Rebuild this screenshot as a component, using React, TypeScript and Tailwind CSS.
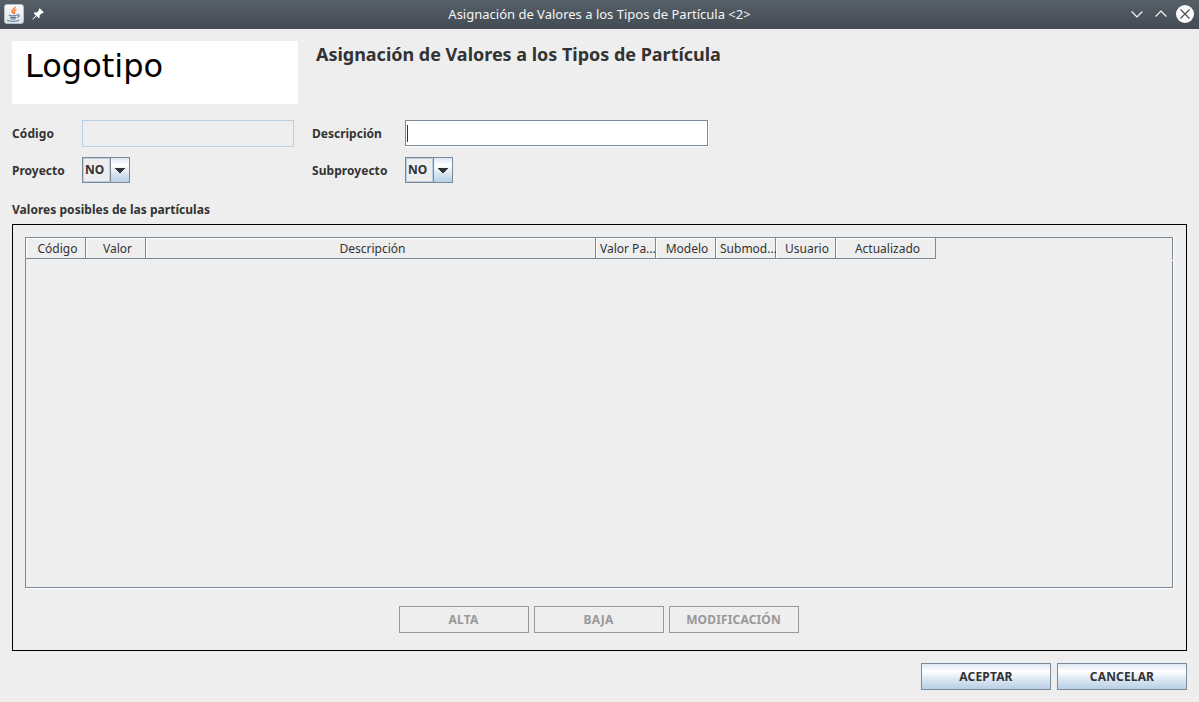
import React from "react";

const columns = [
  { label: "Código", width: "w-[60px]", pad: "pl-[3px]" },
  { label: "Valor", width: "w-[60px]", pad: "pl-[3px]" },
  { label: "Descripción", width: "w-[450px]", pad: "pl-[3px]" },
  { label: "Valor Pa...", width: "w-[60px]", pad: "pl-[3px]" },
  { label: "Modelo", width: "w-[60px]", pad: "pl-[2px]" },
  { label: "Submod...", width: "w-[60px]", pad: "pl-[3px]" },
  { label: "Usuario", width: "w-[60px]", pad: "pl-[2px]" },
  { label: "Actualizado", width: "w-[100px]", pad: "pl-[3px]" },
];

function JavaIcon() {
  return (
    <svg width="20" height="20" viewBox="0 0 20 20" className="block">
      <defs>
        <linearGradient id="tile" x1="0" y1="0" x2="0" y2="1">
          <stop offset="0" stopColor="#fafbfb" />
          <stop offset="1" stopColor="#dfe3e6" />
        </linearGradient>
      </defs>
      <rect x="0.5" y="0.5" width="19" height="19" rx="2.5" fill="url(#tile)" stroke="#b3bfc9" />
      <path d="M11.2 2.6c.4 2-3.6 3-3.2 4.900.2.9 1.500 1.500 1.700 2.500M12.500 5.300c-1.600.9-2.900 1.600-2.400 2.600.4.800.9 1.100.2 2.200" fill="none" stroke="#ee7a30" strokeWidth="1.300" />
      <path d="M4.800 11c2.500 1 6.500.9 8.500 0M6 12.900c2 .8 4.500.7 6.300 0M6.600 14.500c1.600.7 3.600.6 5 0M13.200 11c2.300-.9 3.300 1.300.2 2.700M3.600 15.800c-.9 1.700 9 2 11.400.4" fill="none" stroke="#587f9c" strokeWidth="1.100" />
    </svg>
  );
}

function PinIcon() {
  return (
    <svg width="12" height="12" viewBox="0 0 12 12" className="block">
      <path d="M7.700.3 11.700 4.300 10.700 5.400 9.900 5 7.500 7.400 7.700 9.500 6.700 10.300 4.600 8.100 1 11.600.4 11 3.900 7.400 1.700 5.300 2.600 4.300 4.800 4.500 7 2.300 6.600 1.400Z" fill="#fff" />
    </svg>
  );
}

function TitleBar() {
  return (
    <header className="flex h-[29px] items-center bg-linear-to-b from-[#566069] to-[#434b53] pl-1 pr-[5px] text-[#f4f5f5]">
      <div className="flex w-[70px] items-center gap-2 pb-[1px]">
        <JavaIcon />
        <PinIcon />
      </div>
      <h1 className="flex-1 whitespace-nowrap pl-[1px] text-center text-[13px] leading-[29px]">
        Asignación de Valores a los Tipos de Partícula &lt;2&gt;
      </h1>
      <div className="flex w-[70px] items-center justify-end pb-[1px]">
        <svg width="63" height="18" viewBox="0 0 63 18" className="block">
          <path d="M.6 6.500 6 11.900l5.400-5.400M24.600 11.500 30 6.100l5.400 5.400" fill="none" stroke="#fcfcfc" strokeWidth="1.100" />
          <circle cx="54" cy="9" r="9" fill="#fcfcfc" />
          <path d="m49.500 4.500 9 9m0-9-9 9" stroke="#465059" strokeWidth="1.200" />
        </svg>
      </div>
    </header>
  );
}

function Combo({ value }: { value: string }) {
  return (
    <div className="flex h-[26px] w-[48px] border border-[#7a8a99]">
      <div className="w-[27px] border border-[#b8cfe5] pl-[1px] leading-[22px]">{value}</div>
      <div className="flex w-[19px] items-center justify-center border-l border-[#7a8a99] bg-[linear-gradient(to_bottom,#dde8f3_0%,#ffffff_30%,#dde8f3_60%,#b8cfe5_100%)]">
        <svg width="10" height="5" viewBox="0 0 10 5" shapeRendering="crispEdges" className="mt-px block">
          <path d="M0 0h10v1H9v1H8v1H7v1H6v1H4V4H3V3H2V2H1V1H0z" fill="#333" />
        </svg>
      </div>
    </div>
  );
}

function Button({ label, disabled = false }: { label: string; disabled?: boolean }) {
  return (
    <button
      disabled={disabled}
      className={
        "h-[27px] w-[130px] whitespace-nowrap border text-center font-bold leading-[25px] tracking-[0.15px] " +
        (disabled
          ? "border-[#999999] text-[#999999]"
          : "border-[#7a8a99] bg-[linear-gradient(to_bottom,#dde8f3_0%,#ffffff_30%,#dde8f3_60%,#b8cfe5_100%)] text-[#333333]")
      }
    >
      {label}
    </button>
  );
}

export default function App() {
  return (
    <div className="flex h-[702px] w-[1199px] flex-col overflow-hidden bg-[#eeeeee] font-['Noto_Sans',sans-serif] text-[12px] text-[#333333]">
      <TitleBar />
      <main className="flex flex-1 flex-col px-3 pt-3">
        <div className="flex h-[63px] gap-[18px]">
          <div className="w-[286px] bg-white pl-[13px] font-['DejaVu_Sans',sans-serif] text-[32px] leading-[50px] text-black">
            Logotipo
          </div>
          <h2 className="whitespace-nowrap text-[18px] font-bold leading-[27px] tracking-[-0.02px]">
            Asignación de Valores a los Tipos de Partícula
          </h2>
        </div>

        <div className="mt-4 grid grid-cols-[70px_230px_93px_304px] grid-rows-[27px_26px] gap-y-[10px] whitespace-nowrap font-bold">
          <label className="leading-[27px] tracking-[0.1px]">Código</label>
          <div className="h-[27px] w-[212px] border border-[#b8cfe5]" />
          <label className="leading-[27px]">Descripción</label>
          <div className="h-[27px] border-b border-r border-white">
            <div className="flex h-[26px] items-center border border-[#7a8a99] bg-white pl-[1px]">
              <div className="h-[17px] w-px bg-[#333333]" />
            </div>
          </div>
          <label className="leading-[27px]">Proyecto</label>
          <Combo value="NO" />
          <label className="leading-[27px] tracking-[0.05px]">Subproyecto</label>
          <Combo value="NO" />
        </div>

        <h3 className="mt-[17px] h-[24px] font-bold leading-[19px] tracking-[0.03px]">Valores posibles de las partículas</h3>

        <section className="flex h-[427px] w-[1175px] flex-col border border-black px-3 pt-3">
          <div className="h-[352px] w-[1149px] border-b border-r border-white">
            <div className="h-[351px] w-[1148px] border border-[#7a8a99]">
              <div className="flex h-[21px]">
                {columns.map((c) => (
                  <div
                    key={c.label}
                    className={
                      "h-[21px] shrink-0 whitespace-nowrap border-b border-r border-[#7a8a99] " + c.width
                    }
                  >
                    <div className={"h-5 border-l border-t border-white text-center leading-[20px] " + c.pad}>
                      {c.label}
                    </div>
                  </div>
                ))}
              </div>
              <div className="-mr-px mt-px ml-auto h-px w-px bg-white" />
            </div>
          </div>
          <div className="mt-[17px] flex justify-center gap-[5px] pr-[2px]">
            <Button label="ALTA" disabled />
            <Button label="BAJA" disabled />
            <Button label="MODIFICACIÓN" disabled />
          </div>
        </section>

        <footer className="mt-3 flex justify-end gap-[6px]">
          <Button label="ACEPTAR" />
          <Button label="CANCELAR" />
        </footer>
      </main>
    </div>
  );
}
